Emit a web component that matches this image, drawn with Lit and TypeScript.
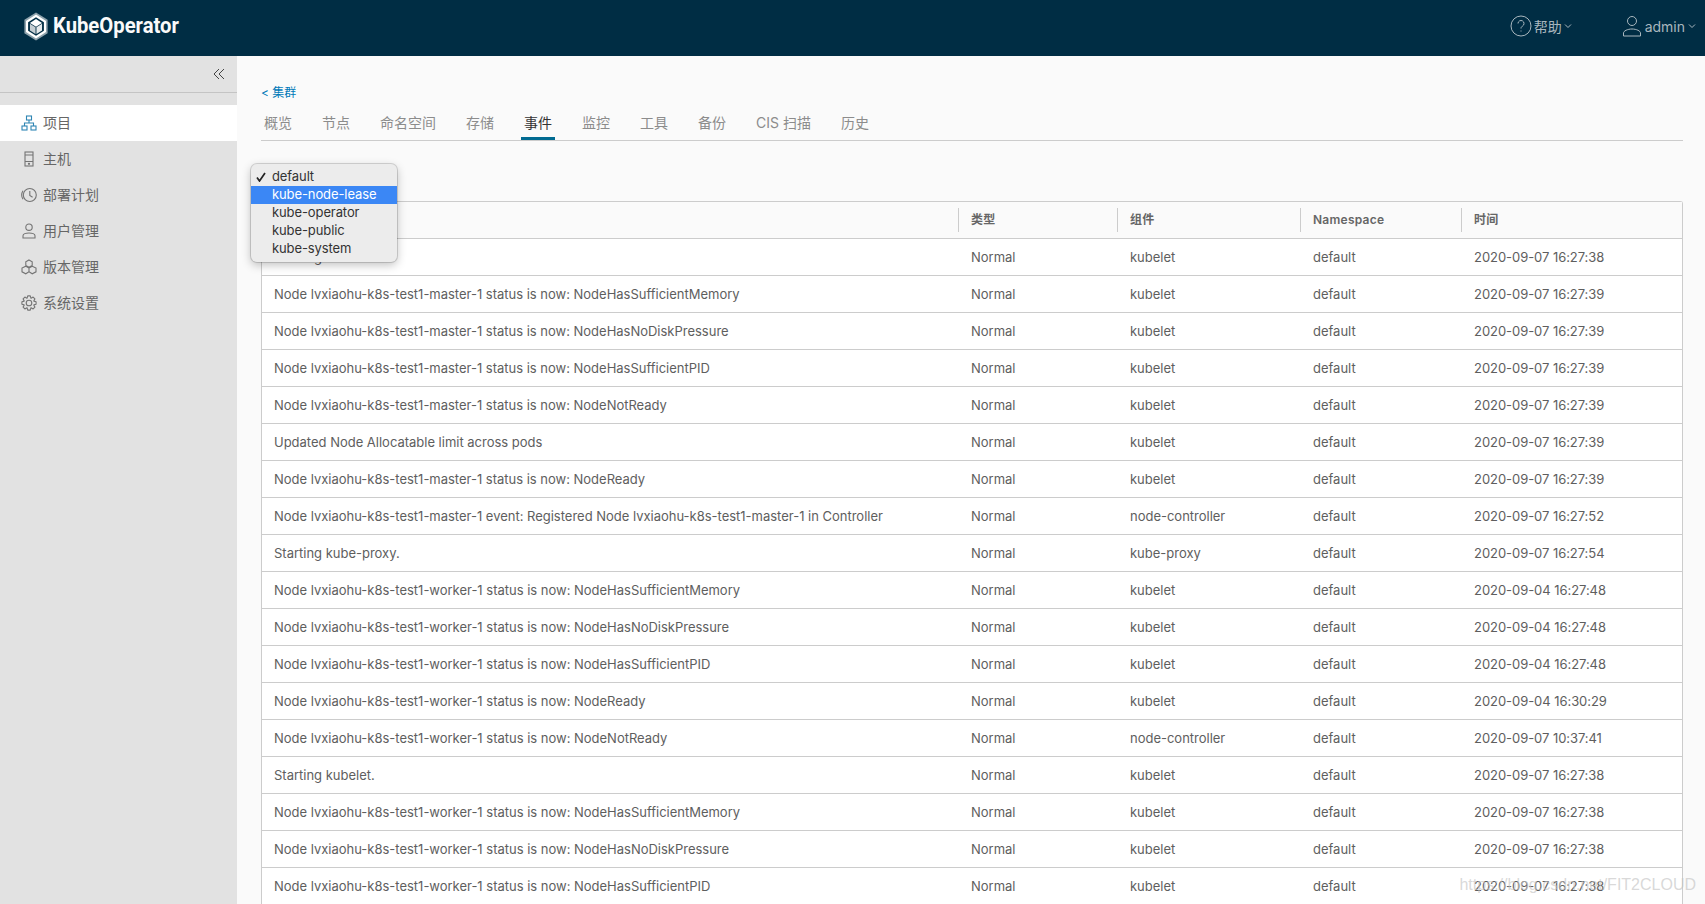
import { LitElement, html, css, svg } from "lit";
import { customElement } from "lit/decorators.js";

const K = "kubelet", NC = "node-controller", KP = "kube-proxy";
const M = "Node lvxiaohu-k8s-test1-master-1 status is now: ";
const W = "Node lvxiaohu-k8s-test1-worker-1 status is now: ";
const rows: [string, string, string][] = [
  ["Starting kubelet.", K, "2020-09-07 16:27:38"],
  [M + "NodeHasSufficientMemory", K, "2020-09-07 16:27:39"],
  [M + "NodeHasNoDiskPressure", K, "2020-09-07 16:27:39"],
  [M + "NodeHasSufficientPID", K, "2020-09-07 16:27:39"],
  [M + "NodeNotReady", K, "2020-09-07 16:27:39"],
  ["Updated Node Allocatable limit across pods", K, "2020-09-07 16:27:39"],
  [M + "NodeReady", K, "2020-09-07 16:27:39"],
  ["Node lvxiaohu-k8s-test1-master-1 event: Registered Node lvxiaohu-k8s-test1-master-1 in Controller", NC, "2020-09-07 16:27:52"],
  ["Starting kube-proxy.", KP, "2020-09-07 16:27:54"],
  [W + "NodeHasSufficientMemory", K, "2020-09-04 16:27:48"],
  [W + "NodeHasNoDiskPressure", K, "2020-09-04 16:27:48"],
  [W + "NodeHasSufficientPID", K, "2020-09-04 16:27:48"],
  [W + "NodeReady", K, "2020-09-04 16:30:29"],
  [W + "NodeNotReady", NC, "2020-09-07 10:37:41"],
  ["Starting kubelet.", K, "2020-09-07 16:27:38"],
  [W + "NodeHasSufficientMemory", K, "2020-09-07 16:27:38"],
  [W + "NodeHasNoDiskPressure", K, "2020-09-07 16:27:38"],
  [W + "NodeHasSufficientPID", K, "2020-09-07 16:27:38"],
];

function gear(cx: number, cy: number, ro: number, ri: number, n: number) {
  const pts: string[] = [];
  for (let i = 0; i < n; i++) {
    const a = (i / n) * Math.PI * 2;
    const w = Math.PI / n;
    const at = (r: number, t: number) => `${(cx + r * Math.cos(t)).toFixed(2)} ${(cy + r * Math.sin(t)).toFixed(2)}`;
    pts.push(at(ri, a - w * 0.95), at(ro, a - w * 0.45), at(ro, a + w * 0.45), at(ri, a + w * 0.95));
  }
  return "M" + pts.join("L") + "Z";
}

const icons = {
  project: svg`<rect x="6.500" y="2" width="5" height="4"/><rect x="2" y="12" width="5" height="4"/><rect x="11" y="12" width="5" height="4"/><path d="M9 6V9M4.500 12V9h9v3"/>`,
  host: svg`<rect x="5" y="2" width="8" height="14"/><path d="M5 5h8M5 11.500h8"/><circle cx="9" cy="13.800" r=".6"/>`,
  plan: svg`<circle cx="9.800" cy="9" r="6.500"/><path d="M3 4.800A7.800 7.800 0 0 0 3 13.200M9.800 5V9.500l2.800 1.800"/>`,
  user: svg`<circle cx="9" cy="5.200" r="3.200"/><path d="M3 16v-2.200c0-1.500 2.700-2.800 6-2.800s6 1.300 6 2.800V16z"/>`,
  version: svg`<path d="M9 2l3.200 1.800v3.600L9 9.200 5.800 7.400V3.800zM5.800 8.200 9 10v3.800l-3.200 2-3.800-2V10zM12.200 8.200 16 10v3.800l-3.800 2L9 13.800V10z"/>`,
  settings: svg`<circle cx="9" cy="9" r="2.800"/><path d=${gear(9, 9, 7.2, 5.2, 8)} stroke-linejoin="round"/>`,
};

@customElement("app-root")
export class AppRoot extends LitElement {
  static styles = css`
    :host { display: block; height: 904px; overflow: hidden; position: relative; background: #fafafa;
      font-family: Inter, "Noto Sans CJK SC", sans-serif; color: #5e5e5e; }
    * { box-sizing: border-box; }
    .hdr { height: 56px; background: #002d44; display: flex; align-items: center; color: #fff; }
    .brand { display: flex; align-items: center; gap: 4px; margin-left: 23px; margin-bottom: 4px; }
    .brand-name { display: inline-block; font: 700 22px/1 Roboto, sans-serif; color: #fafafa; width: 126px; white-space: nowrap; transform: scaleX(.92); transform-origin: left center; }
    .hdr-right { margin-left: auto; display: flex; align-items: center; color: #a9b7be; font-size: 14px; margin-bottom: 4px; }
    .hitem { display: flex; align-items: center; gap: 2px; }
    .help { margin-right: 50px; }
    .admin { margin-right: 9px; gap: 3px; }
    .hitem svg { fill: none; stroke: #a9b7be; }
    .body { display: flex; height: 848px; }
    .side { width: 237px; background: #e2e2e2; flex: none; }
    .collapse { height: 37px; border-bottom: 1px solid #c4c4c4; display: flex; justify-content: flex-end; align-items: center; padding-right: 12px; margin-bottom: 12px; }
    .nav { height: 36px; display: flex; align-items: center; padding-left: 20px; gap: 5px; font-size: 14px; color: #666; }
    .nav span { padding-bottom: 2px; }
    .nav.on { background: #fff; }
    .nav svg { width: 18px; height: 18px; fill: none; stroke: #747474; stroke-width: 1.100; }
    .nav.on svg { stroke: #2f86b4; }
    .main { flex: 1; padding: 30px 22px 0 24px; position: relative; min-width: 0; }
    .crumb { font-size: 12px; line-height: 14px; color: #0079b8; }
    .tabs { display: flex; height: 41px; border-bottom: 1px solid #ccc; padding-top: 3px; gap: 24px; }
    .tab { padding: 0 3px; font-size: 14px; line-height: 40px; color: #8c8c8c; height: 37px; white-space: pre; }
    .tab.on { color: #333; border-bottom: 3px solid #006a91; }
    .grid { margin-top: 60px; background: #fff; border: 1px solid #ccc; border-radius: 3px 3px 0 0; border-bottom: 0; font-size: 13px; letter-spacing: -.01px; }
    .row { display: grid; grid-template-columns: 696px 159px 183px 161px 1fr; height: 37px; border-bottom: 1px solid #ccc; align-items: center; padding-bottom: 1px; }
    .cell { padding-left: 12px; white-space: nowrap; border-left: 1px solid transparent; }
    .cell:first-child { border-left: 0; }
    .cell:nth-child(5) { letter-spacing: -.05px; }
    .head { background: #fafafa; font-size: 12px; font-weight: 600; color: #666; padding-bottom: 0; }
    .head .cell { height: 24px; line-height: 24px; border-left-color: #ccc; letter-spacing: .25px; }
    .menu { position: absolute; left: 14px; top: 108px; width: 146px; height: 98px; background: #ececec; border-radius: 6px;
      box-shadow: 0 0 0 1px rgba(0,0,0,.14), 0 3px 10px rgba(0,0,0,.25); padding: 4px 0; font: 13px/16px Inter, sans-serif; letter-spacing: -.1px; color: #333; }
    .opt { height: 18px; padding-left: 21px; position: relative; }
    .opt.sel { background: #3b87f5; color: #fff; }
    .check { position: absolute; left: 5px; top: 4px; width: 10px; height: 10px; fill: none; stroke: #222; stroke-width: 1.700; }
    .mark { position: absolute; right: 9px; bottom: 11px; font: 16px/1 "Liberation Sans", sans-serif; color: rgba(195,195,195,.65); }
  `;

  render() {
    const nav: [keyof typeof icons, string][] = [
      ["project", "项目"], ["host", "主机"], ["plan", "部署计划"],
      ["user", "用户管理"], ["version", "版本管理"], ["settings", "系统设置"],
    ];
    const tabs = ["概览", "节点", "命名空间", "存储", "事件", "监控", "工具", "备份", "CIS 扫描", "历史"];
    return html`
      <div class="hdr">
        <div class="brand">
          <svg width="26" height="29" viewBox="0 0 28 28" preserveAspectRatio="none">
            <path d="M14 .5 26.500 7.500v13L14 27.500 1.500 20.500v-13z" fill="#8fa3ad"/>
            <path d="M14 2.500 24.800 8.600v10.800L14 25.500 3.200 19.400V8.600z" fill="#fff"/>
            <path d="M14 5 22.500 9.800v8.400L14 23 5.500 18.200V9.800z" fill="#002d44"/>
            <path d="M14 6.800 20.500 10.500 14 14.200 7.500 10.500z" fill="#fff"/>
            <path d="M7.500 11.300l6 3.400v6.500l-6-3.400z" fill="#c5ced3"/>
            <path d="M20.500 11.300 14.500 14.700v6.500l6-3.400z" fill="#e6eaec"/>
          </svg>
          <span class="brand-name">KubeOperator</span>
        </div>
        <div class="hdr-right">
          <div class="hitem help">
            <svg width="22" height="22" viewBox="0 0 22 22"><circle cx="11" cy="11" r="10"/><path d="M8 8.500a3 3 0 1 1 4.500 2.600c-1 .6-1.500 1.200-1.500 2.400M11 15.500v1"/></svg>
            <span>帮助</span>
            <svg width="8" height="8" viewBox="0 0 8 8"><path d="M1 2.500l3 3 3-3"/></svg>
          </div>
          <div class="hitem admin">
            <svg width="20" height="22" viewBox="0 0 20 22"><circle cx="10" cy="6" r="4.500"/><path d="M1.500 21v-3c0-2 4-4 8.500-4s8.500 2 8.500 4v3z"/></svg>
            <span>admin</span>
            <svg width="8" height="8" viewBox="0 0 8 8"><path d="M1 2.500l3 3 3-3"/></svg>
          </div>
        </div>
      </div>
      <div class="body">
        <div class="side">
          <div class="collapse">
            <svg width="12" height="12" viewBox="0 0 12 12" fill="none" stroke="#444"><path d="M6 1 1 6l5 5M11 1 6 6l5 5"/></svg>
          </div>
          ${nav.map(([k, t], i) => html`<div class="nav ${i === 0 ? "on" : ""}"><svg viewBox="0 0 18 18">${icons[k]}</svg><span>${t}</span></div>`)}
        </div>
        <div class="main">
          <div class="crumb">&lt; 集群</div>
          <div class="tabs">${tabs.map((t, i) => html`<div class="tab ${i === 4 ? "on" : ""}">${t}</div>`)}</div>
          <div class="grid">
            <div class="row head">
              <div class="cell"></div><div class="cell">类型</div><div class="cell">组件</div><div class="cell">Namespace</div><div class="cell">时间</div>
            </div>
            ${rows.map(r => html`<div class="row">
              <div class="cell">${r[0]}</div><div class="cell">Normal</div><div class="cell">${r[1]}</div><div class="cell">default</div><div class="cell">${r[2]}</div>
            </div>`)}
          </div>
          <div class="menu">
            <div class="opt"><svg class="check" viewBox="0 0 10 10"><path d="M1 5.500l2.500 3.500L9 1"/></svg>default</div>
            <div class="opt sel">kube-node-lease</div>
            <div class="opt">kube-operator</div>
            <div class="opt">kube-public</div>
            <div class="opt">kube-system</div>
          </div>
        </div>
      </div>
      <div class="mark">https://blog.csdn.net/FIT2CLOUD</div>
    `;
  }
}
